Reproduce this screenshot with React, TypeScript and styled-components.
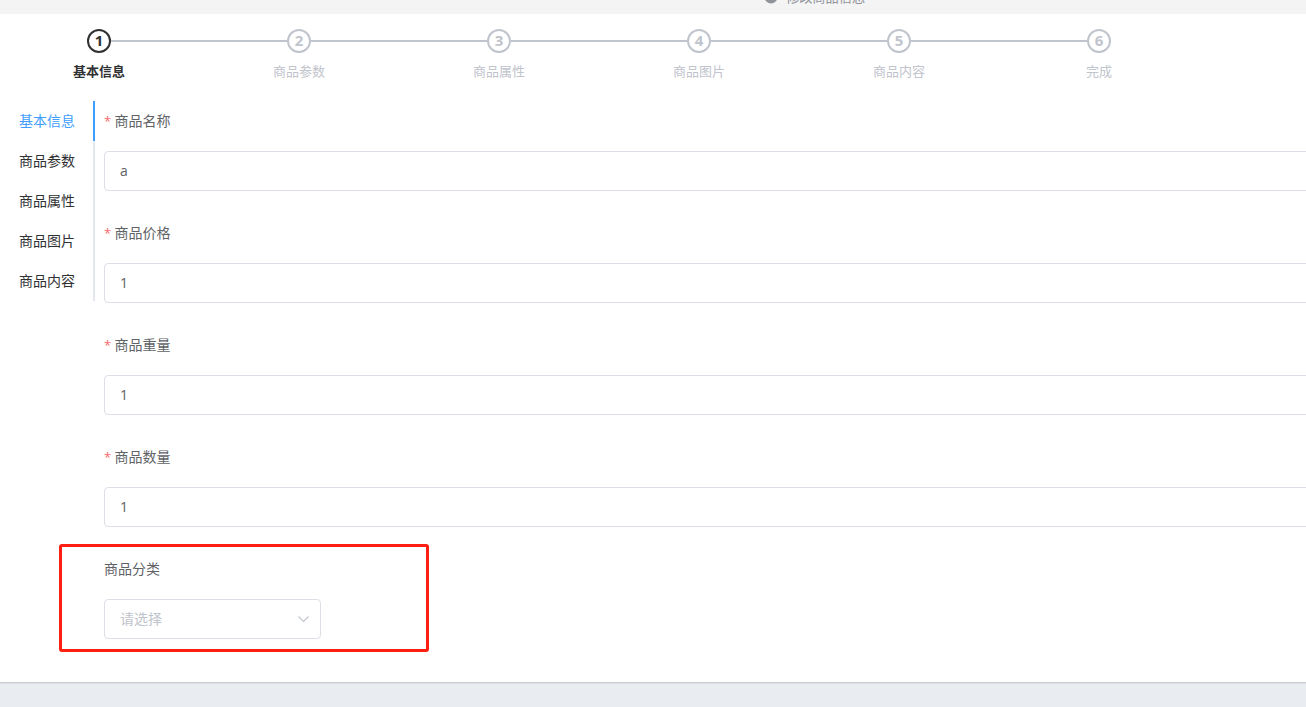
import * as React from 'react';
import styled, { createGlobalStyle } from 'styled-components';

type Field = {
  name: string;
  label: string;
  value: string;
};

const steps: string[] = [
  '基本信息',
  '商品参数',
  '商品属性',
  '商品图片',
  '商品内容',
  '完成',
];

const tabs: string[] = steps.slice(0, 5);

const initialFields: Field[] = [
  { name: 'name', label: '商品名称', value: 'a' },
  { name: 'price', label: '商品价格', value: '1' },
  { name: 'weight', label: '商品重量', value: '1' },
  { name: 'number', label: '商品数量', value: '1' },
];

const GlobalStyle = createGlobalStyle`
  * {
    box-sizing: border-box;
  }

  body {
    margin: 0;
    overflow: hidden;
    background: #e9ecf1;
    color: #303133;
    font-family: 'Open Sans', 'Noto Sans CJK SC', sans-serif;
    font-size: 14px;
  }
`;

const StyledPage = styled.div`
  height: 707px;
  overflow: hidden;
`;

const StyledCard = styled.main`
  width: 1700px;
  height: 683px;
  background: #ffffff;
  border-bottom: 1px solid #cbccd0;
  box-shadow: 0 1px 1px rgba(0, 0, 0, 0.05);
`;

const StyledAlert = styled.div`
  display: flex;
  align-items: flex-end;
  gap: 8px;
  height: 14px;
  padding: 0 0 8px 764px;
  overflow: hidden;
  background: #f4f4f5;
  color: #909399;
  font-size: 13.2px;
  line-height: 18px;
`;

const StyledAlertIcon = styled.svg`
  flex: none;
  width: 14px;
  height: 14px;
  margin-bottom: 2px;
`;

const StyledSteps = styled.ol`
  display: flex;
  height: 87px;
  margin: 0;
  padding: 15px 0 0;
  list-style: none;
`;

type ActiveProps = {
  $active: boolean;
};

const StyledStep = styled.li<ActiveProps>`
  display: grid;
  grid-template-columns: 1fr 24px 1fr;
  grid-template-rows: 24px 38px;
  align-items: center;
  align-content: start;
  width: 200px;
  flex: none;
  color: ${(props) => (props.$active ? '#303133' : '#c0c4cc')};
  font-weight: ${(props) => (props.$active ? 700 : 400)};

  &:first-child {
    margin-left: -1px;
  }
`;

const StyledStepLine = styled.span<{ $hidden: boolean }>`
  height: 2px;
  background: ${(props) => (props.$hidden ? 'transparent' : '#c0c4cc')};
`;

const StyledStepIcon = styled.span`
  display: flex;
  align-items: center;
  justify-content: center;
  width: 24px;
  height: 24px;
  padding-bottom: 2px;
  border: 2px solid currentColor;
  border-radius: 50%;
  font-size: 15px;
  font-weight: 700;
  line-height: 14px;
`;

const StyledStepTitle = styled.span`
  grid-column: 1 / -1;
  text-align: center;
  font-size: 13px;
  line-height: 36px;
  height: 38px;
`;

const StyledContent = styled.div`
  display: flex;
`;

const StyledTabs = styled.nav`
  width: 95px;
  flex: none;
`;

const StyledTab = styled.div<ActiveProps>`
  height: 40px;
  padding-left: 19px;
  border-right: 2px solid
    ${(props) => (props.$active ? '#409eff' : '#e4e7ed')};
  color: ${(props) => (props.$active ? '#409eff' : '#303133')};
  line-height: 40px;
  cursor: pointer;
`;

const StyledForm = styled.form`
  flex: 1;
  padding-left: 9px;
`;

const StyledFormItem = styled.div`
  position: relative;
  margin-bottom: 22px;
`;

const StyledLabel = styled.label<{ $required?: boolean }>`
  display: block;
  height: 50px;
  color: #606266;
  line-height: 40px;

  &::before {
    content: ${(props) => (props.$required ? "'*'" : 'none')};
    display: inline-block;
    width: 10.5px;
    color: #f56c6c;
    font-size: 13px;
    line-height: 20px;
  }
`;

const StyledInput = styled.input`
  display: block;
  width: 100%;
  height: 40px;
  padding: 0 15px 2px;
  border: 1px solid #dcdfe6;
  border-radius: 4px;
  outline: none;
  background: #ffffff;
  color: #606266;
  font: inherit;
`;

const StyledSelect = styled.div`
  display: flex;
  align-items: center;
  justify-content: space-between;
  width: 217px;
  height: 40px;
  padding: 0 11px 0 15px;
  border: 1px solid #dcdfe6;
  border-radius: 4px;
  color: #c0c4cc;
  line-height: 37px;
  cursor: pointer;
`;

const StyledPlaceholder = styled.span`
  height: 38px;
`;

const StyledHighlight = styled.div`
  position: absolute;
  top: -5px;
  left: -45px;
  width: 370px;
  height: 108px;
  border: 3px solid #ff1e12;
  border-radius: 3px;
  pointer-events: none;
`;

const Steps: React.FC<{ current: number }> = ({ current }) => (
  <StyledSteps>
    {steps.map((title, index) => (
      <StyledStep key={title} $active={index === current}>
        <StyledStepLine $hidden={index === 0} />
        <StyledStepIcon>{index + 1}</StyledStepIcon>
        <StyledStepLine $hidden={index === steps.length - 1} />
        <StyledStepTitle>{title}</StyledStepTitle>
      </StyledStep>
    ))}
  </StyledSteps>
);

type InputFieldProps = {
  field: Field;
  onChange: (name: string, value: string) => void;
};

const InputField: React.FC<InputFieldProps> = ({ field, onChange }) => (
  <StyledFormItem>
    <StyledLabel htmlFor={field.name} $required>
      {field.label}
    </StyledLabel>
    <StyledInput
      id={field.name}
      value={field.value}
      onChange={(event) => onChange(field.name, event.target.value)}
    />
  </StyledFormItem>
);

const App: React.FC = () => {
  const [current, setCurrent] = React.useState(0);
  const [fields, setFields] = React.useState(initialFields);

  const handleChange = (name: string, value: string) => {
    setFields(
      fields.map((field) =>
        field.name === name ? { ...field, value } : field
      )
    );
  };

  return (
    <StyledPage>
      <GlobalStyle />
      <StyledCard>
        <StyledAlert>
          <StyledAlertIcon viewBox="0 0 14 14">
            <circle cx="7" cy="7" r="6.5" fill="currentColor" />
            <path d="M7 6v4M7 3.2v1.4" stroke="#fff" strokeWidth="1.4" />
          </StyledAlertIcon>
          <span>修改商品信息</span>
        </StyledAlert>

        <Steps current={current} />

        <StyledContent>
          <StyledTabs>
            {tabs.map((tab, index) => (
              <StyledTab
                key={tab}
                $active={index === current}
                onClick={() => setCurrent(index)}
              >
                {tab}
              </StyledTab>
            ))}
          </StyledTabs>

          <StyledForm>
            {fields.map((field) => (
              <InputField
                key={field.name}
                field={field}
                onChange={handleChange}
              />
            ))}
            <StyledFormItem>
              <StyledLabel>商品分类</StyledLabel>
              <StyledSelect>
                <StyledPlaceholder>请选择</StyledPlaceholder>
                <svg width="12" height="12" viewBox="0 0 12 12" fill="none">
                  <path
                    d="M1.5 3.5l5 5 5-5"
                    stroke="#c0c4cc"
                    strokeWidth="1.2"
                  />
                </svg>
              </StyledSelect>
              <StyledHighlight />
            </StyledFormItem>
          </StyledForm>
        </StyledContent>
      </StyledCard>
    </StyledPage>
  );
};

export default App;
